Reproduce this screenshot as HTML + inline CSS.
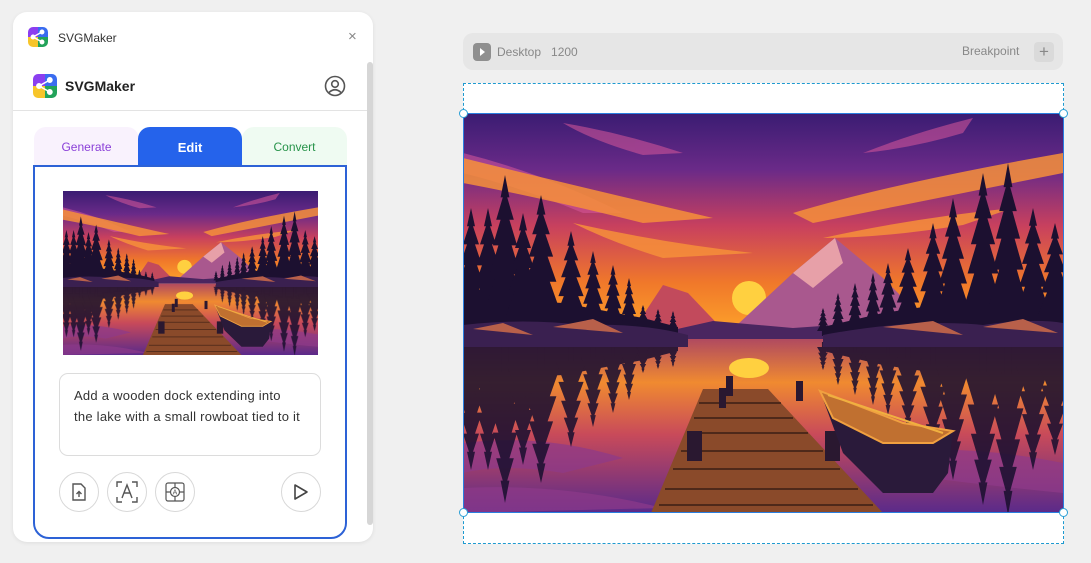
<!DOCTYPE html>
<html><head><meta charset="utf-8">
<style>
*{box-sizing:border-box;margin:0;padding:0}
body{width:1091px;height:563px;background:#f0f0f0;font-family:"Liberation Sans",sans-serif;position:relative;overflow:hidden}
.panel{position:absolute;left:13px;top:12px;width:360px;height:530px;background:#fff;border-radius:14px;box-shadow:0 1px 4px rgba(0,0,0,.08)}
.abs{position:absolute}
.logo{width:20px;height:20px;border-radius:5px;overflow:hidden}
.tab{position:absolute;top:127px;height:40px;font-size:13px;display:flex;align-items:center;justify-content:center;border-radius:12px 12px 0 0}
.circ{position:absolute;width:40px;height:40px;border:1px solid #d8d8d8;border-radius:50%;top:472px;display:flex;align-items:center;justify-content:center}
</style></head><body>
<svg width="0" height="0" style="position:absolute">
<defs>
<linearGradient id="sky" x1="0" y1="0" x2="0" y2="1">
<stop offset="0" stop-color="#3a1c72"/><stop offset=".25" stop-color="#6a2a88"/><stop offset=".5" stop-color="#c8405e"/><stop offset=".75" stop-color="#f0782a"/><stop offset="1" stop-color="#ffa82a"/></linearGradient>
<linearGradient id="water" x1="0" y1="0" x2="0" y2="1">
<stop offset="0" stop-color="#b04a60"/><stop offset=".25" stop-color="#f08a30"/><stop offset=".55" stop-color="#c84a5a"/><stop offset="1" stop-color="#5a2a8a"/></linearGradient>
<path id="tr" d="M0,0 L4,14 L2,14 L8,28 L4,28 L11,44 L6,44 L14,62 L8,62 L17,82 L3,82 L3,100 L-3,100 L-3,82 L-17,82 L-8,62 L-14,62 L-6,44 L-11,44 L-4,28 L-8,28 L-2,14 L-4,14 Z" fill="#1c1030"/>
<g id="trees">
<path d="M0,185 L100,190 L180,205 L215,214 L215,226 L0,226Z" fill="#1c1030"/>
<path d="M600,185 L500,188 L420,200 L360,214 L360,226 L600,226Z" fill="#1c1030"/>
<use href="#tr" transform="translate(8,95) scale(1,1.3)"/>
<use href="#tr" transform="translate(25,95) scale(1,1.3)"/>
<use href="#tr" transform="translate(42,62) scale(1.1,1.6)"/>
<use href="#tr" transform="translate(60,100) scale(1,1.25)"/>
<use href="#tr" transform="translate(78,82) scale(1.1,1.4)"/>
<use href="#tr" transform="translate(108,118) scale(.9,1.05)"/>
<use href="#tr" transform="translate(130,138) scale(.7,.85)"/>
<use href="#tr" transform="translate(150,152) scale(.6,.7)"/>
<use href="#tr" transform="translate(166,165) scale(.5,.58)"/>
<use href="#tr" transform="translate(180,192) scale(.4,.32)"/>
<use href="#tr" transform="translate(195,196) scale(.35,.28)"/>
<use href="#tr" transform="translate(210,198) scale(.3,.25)"/>
<use href="#tr" transform="translate(360,195) scale(.35,.28)"/>
<use href="#tr" transform="translate(375,180) scale(.4,.42)"/>
<use href="#tr" transform="translate(392,170) scale(.45,.52)"/>
<use href="#tr" transform="translate(410,160) scale(.5,.62)"/>
<use href="#tr" transform="translate(425,150) scale(.6,.72)"/>
<use href="#tr" transform="translate(445,135) scale(.8,.88)"/>
<use href="#tr" transform="translate(470,110) scale(.9,1.1)"/>
<use href="#tr" transform="translate(490,85) scale(1,1.38)"/>
<use href="#tr" transform="translate(520,60) scale(1.1,1.62)"/>
<use href="#tr" transform="translate(545,50) scale(1.1,1.72)"/>
<use href="#tr" transform="translate(570,95) scale(1,1.27)"/>
<use href="#tr" transform="translate(592,110) scale(1,1.12)"/>
</g>
<symbol id="scene" viewBox="0 0 600 400" preserveAspectRatio="none">
<rect width="600" height="226" fill="url(#sky)"/>
<g fill="#d8589a" opacity=".55">
<path d="M100,10 Q160,20 220,40 L180,42 Q130,28 100,10Z"/>
<path d="M400,40 Q450,20 510,5 L500,20 Q450,35 400,40Z"/>
<path d="M0,40 Q80,60 160,100 L120,100 Q60,75 0,60Z"/>
</g>
<g fill="#f7903a" opacity=".85">
<path d="M0,45 Q100,70 250,105 L180,110 Q80,85 0,70Z"/>
<path d="M330,100 Q430,70 600,40 L600,60 Q450,90 350,110Z"/>
<path d="M110,110 Q200,130 290,140 L200,145 Q150,130 110,110Z"/>
<path d="M360,125 Q450,105 550,95 L500,112 Q420,125 360,125Z"/>
</g>
<circle cx="286" cy="185" r="17" fill="#ffd040"/>
<path d="M165,225 L200,172 L225,180 L265,222 Z" fill="#c24a5c"/>
<path d="M260,225 L330,160 L372,125 L420,165 L455,200 L470,225 Z" fill="#a9588e"/>
<path d="M330,160 L372,125 L380,150 L350,175 Z" fill="#e7a0a8"/>
<path d="M170,226 L250,208 L330,215 L430,208 L470,226 Z" fill="#4a2660"/>
<rect y="226" width="600" height="174" fill="url(#water)"/>
<ellipse cx="286" cy="255" rx="20" ry="10" fill="#ffd040"/>
<g fill="#8e3a8a" opacity=".7">
<path d="M0,330 Q80,320 160,345 L100,360 Q40,350 0,360Z"/>
<path d="M420,340 Q500,330 600,350 L600,380 Q500,370 430,360Z"/>
<path d="M0,375 Q100,370 200,395 L0,400Z"/>
</g>
<use href="#trees"/>
<g transform="translate(0,452) scale(1,-1)" opacity=".88"><use href="#trees"/></g>
<path d="M0,212 Q60,205 120,212 Q180,210 225,222 L225,234 L0,234Z" fill="#3a2050"/>
<path d="M360,222 Q450,205 520,212 Q570,205 600,210 L600,234 L360,234Z" fill="#3a2050"/>
<path d="M10,216 L40,210 L70,222Z M90,214 L130,206 L160,220Z M420,214 L470,208 L500,222Z M520,214 L560,206 L595,220Z" fill="#b8604a"/>
<path d="M240,276 L305,276 L420,400 L188,400 Z" fill="#8a4a2a"/>
<g stroke="#3a1e14" stroke-width="1.5">
<line x1="236" y1="290" x2="318" y2="290"/><line x1="231" y1="305" x2="330" y2="305"/><line x1="225" y1="320" x2="345" y2="320"/><line x1="218" y1="338" x2="360" y2="338"/><line x1="210" y1="356" x2="377" y2="356"/><line x1="202" y1="376" x2="395" y2="376"/><line x1="196" y1="392" x2="410" y2="392"/></g>
<rect x="263" y="263" width="7" height="20" fill="#2a1830"/><rect x="256" y="275" width="7" height="20" fill="#2a1830"/><rect x="333" y="268" width="7" height="20" fill="#2a1830"/>
<rect x="224" y="318" width="15" height="30" fill="#2a1830"/><rect x="362" y="318" width="15" height="30" fill="#2a1830"/>
<path d="M357,278 L440,310 L490,318 L485,360 L470,380 L420,380 L380,340 Z" fill="#2a1a3a"/>
<path d="M357,278 L440,310 L490,318 L470,330 L420,330 L370,305 Z" fill="#c07030" stroke="#f0a040" stroke-width="2"/>
<path d="M365,282 L480,320" stroke="#f0b040" stroke-width="2"/>
</symbol>
</defs></svg>

<!-- Left panel -->
<div class="panel">
<div class="abs logo" style="left:15px;top:15px"><svg width="20" height="20" viewBox="0 0 20 20"><rect width="10" height="10" fill="#8b3ff0"/><rect x="10" width="10" height="10" fill="#3a6cf0"/><rect y="10" width="10" height="10" fill="#f7c52a"/><rect x="10" y="10" width="10" height="10" fill="#23a35a"/><g stroke="#fff" stroke-width="1.3" fill="#fff"><line x1="5" y1="10" x2="14" y2="5"/><line x1="5" y1="10" x2="14" y2="15"/><circle cx="5" cy="10" r="1.8"/><circle cx="14" cy="5" r="1.8"/><circle cx="14" cy="15" r="1.8"/></g></svg></div>
<div class="abs" style="left:45px;top:19px;font-size:12px;color:#333">SVGMaker</div>
<div class="abs" style="left:335px;top:16px;font-size:15px;color:#888">×</div>
<div class="abs" style="left:354px;top:50px;width:6px;height:463px;background:#d6d6d6;border-radius:3px"></div>
<div class="abs logo" style="left:20px;top:62px;width:24px;height:24px"><svg width="24" height="24" viewBox="0 0 20 20"><rect width="10" height="10" fill="#8b3ff0"/><rect x="10" width="10" height="10" fill="#3a6cf0"/><rect y="10" width="10" height="10" fill="#f7c52a"/><rect x="10" y="10" width="10" height="10" fill="#23a35a"/><g stroke="#fff" stroke-width="1.3" fill="#fff"><line x1="5" y1="10" x2="14" y2="5"/><line x1="5" y1="10" x2="14" y2="15"/><circle cx="5" cy="10" r="1.8"/><circle cx="14" cy="5" r="1.8"/><circle cx="14" cy="15" r="1.8"/></g></svg></div>
<div class="abs" style="left:52px;top:66px;font-size:14px;font-weight:bold;color:#222">SVGMaker</div>
<svg class="abs" style="left:311px;top:63px" width="22" height="22" viewBox="0 0 22 22" fill="none" stroke="#555" stroke-width="1.6"><circle cx="11" cy="11" r="9.5"/><circle cx="11" cy="9" r="3.3"/><path d="M5,17.5 Q11,12 17,17.5"/></svg>
<div class="abs" style="left:0;top:98px;width:354px;height:1px;background:#e3e3e3"></div>
</div>
<div class="tab" style="left:34px;width:105px;background:#f9f2fd;color:#8a3fd8;font-size:12px">Generate</div>
<div class="tab" style="left:138px;width:104px;background:#2563eb;color:#fff;font-weight:bold">Edit</div>
<div class="tab" style="left:242px;width:105px;background:#effbf2;color:#27934a;font-size:12px">Convert</div>
<div class="abs" style="left:33px;top:165px;width:314px;height:374px;border:2px solid #2d62d6;border-radius:0 0 16px 16px;background:#fff"></div>
<svg class="abs" style="left:63px;top:191px" width="255" height="164"><use href="#scene" width="255" height="164"/></svg>
<div class="abs" style="left:59px;top:373px;width:262px;height:83px;border:1px solid #dcdcdc;border-radius:9px;padding:11px 14px 0 14px;font-size:13px;letter-spacing:.25px;line-height:21px;color:#333"><div style="width:232px">Add a wooden dock extending into<br>the lake with a small rowboat tied to it</div></div>
<div class="circ" style="left:59px"><svg width="16" height="18" viewBox="0 0 16 18" fill="none" stroke="#555" stroke-width="1.4"><path d="M2,1 H10 L14,5 V17 H2Z"/><path d="M8,14 V9 M5.5,11 L8,8.5 L10.5,11"/></svg></div>
<div class="circ" style="left:107px"><svg width="22" height="22" viewBox="0 0 22 22" fill="none" stroke="#555" stroke-width="1.4"><path d="M1,6 V1 H6 M16,1 H21 V6 M21,16 V21 H16 M6,21 H1 V16"/><path d="M6,17 L11,4 L16,17 M8,12 H14"/></svg></div>
<div class="circ" style="left:155px"><svg width="20" height="20" viewBox="0 0 20 20" fill="none" stroke="#555" stroke-width="1.2"><rect x="1" y="1" width="18" height="18" rx="2"/><path d="M1,10 H5 M15,10 H19 M10,1 V5 M10,15 V19"/><circle cx="10" cy="10" r="4.5"/><text x="10" y="12.5" font-size="7" text-anchor="middle" fill="#555" stroke="none" font-family="Liberation Sans">A</text></svg></div>
<div class="circ" style="left:281px"><svg width="16" height="18" viewBox="0 0 16 18" fill="none" stroke="#444" stroke-width="1.6" stroke-linejoin="round"><path d="M2,2 L14,9 L2,16Z"/></svg></div>

<!-- Right -->
<div class="abs" style="left:463px;top:33px;width:600px;height:37px;background:#e6e6e6;border-radius:10px"></div>
<div class="abs" style="left:473px;top:43px;width:18px;height:18px;background:#8f8f8f;border-radius:4px"><svg width="18" height="18"><path d="M7,5 L12,9 L7,13Z" fill="#fff"/></svg></div>
<div class="abs" style="left:497px;top:45px;font-size:12px;color:#888">Desktop&nbsp;&nbsp;&nbsp;1200</div>
<div class="abs" style="left:962px;top:44px;font-size:12px;color:#888">Breakpoint</div>
<div class="abs" style="left:1034px;top:42px;width:20px;height:20px;background:#dadada;border-radius:4px;color:#888;font-size:17px;line-height:20px;text-align:center">+</div>
<div class="abs" style="left:463px;top:83px;width:601px;height:461px;border:1px dashed #1e9ad0;background:#fff"></div>
<svg class="abs" style="left:463px;top:113px" width="600" height="400"><use href="#scene" width="600" height="400"/></svg>
<div class="abs" style="left:463px;top:113px;width:601px;height:400px;border:1px solid #2a7fe0"></div>
<div class="abs" style="left:459px;top:109px;width:9px;height:9px;border:1px solid #2a9fd6;border-radius:50%;background:#fff"></div>
<div class="abs" style="left:1059px;top:109px;width:9px;height:9px;border:1px solid #2a9fd6;border-radius:50%;background:#fff"></div>
<div class="abs" style="left:459px;top:508px;width:9px;height:9px;border:1px solid #2a9fd6;border-radius:50%;background:#fff"></div>
<div class="abs" style="left:1059px;top:508px;width:9px;height:9px;border:1px solid #2a9fd6;border-radius:50%;background:#fff"></div>
</body></html>
